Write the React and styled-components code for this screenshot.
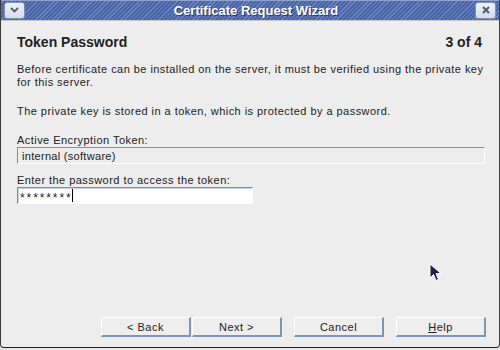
import React from "react";
import styled, { createGlobalStyle } from "styled-components";

const Global = createGlobalStyle`
  html, body { margin: 0; padding: 0; background: #e6e6e6; }
  body { font-family: "Liberation Sans", Arial, sans-serif; }
  * { box-sizing: border-box; }
`;

const Window = styled.div`
  position: relative;
  width: 500px;
  height: 348px;
  display: flex;
  flex-direction: column;
  background: #ededed;
  border-left: 1px solid #3a3a3a;
  border-right: 1px solid #3a3a3a;
  border-bottom: 1px solid #222;
  border-radius: 0 0 4px 4px;
  overflow: hidden;
`;

const TitleBar = styled.div`
  height: 21px;
  flex: none;
  display: flex;
  align-items: center;
  padding: 0 3px;
  gap: 4px;
  background: repeating-linear-gradient(
    135deg,
    #4a66a6 0px,
    #4a66a6 2px,
    #6c86c2 2px,
    #6c86c2 3px
  );
  border-bottom: 1px solid #c8c8c8;
  box-shadow: inset 0 1px 0 #8fa3d0;
`;

const TitleButton = styled.div`
  width: 21px;
  height: 17px;
  flex: none;
  display: flex;
  align-items: center;
  justify-content: center;
  background: linear-gradient(#eef1f7, #d6dcea);
  border: 1px solid #8091b6;
  border-radius: 3px;
  color: #4d5a76;
`;

const Title = styled.div`
  flex: 1;
  text-align: center;
  padding-left: 12px;
  color: #ffffff;
  font-weight: bold;
  font-size: 13px;
  text-shadow: 1px 1px 0 #2c3d6e;
`;

const Content = styled.div`
  flex: 1;
  display: flex;
  flex-direction: column;
  padding: 12px 13px 10px 16px;
  color: #222;
  font-size: 11px;
  letter-spacing: 0.45px;
`;

const Header = styled.div`
  display: flex;
  justify-content: space-between;
  align-items: center;
  font-weight: bold;
  font-size: 14px;
  letter-spacing: 0;
  height: 18px;
  padding-right: 4px;
  color: #222;
`;

const Para = styled.p`
  margin: ${(p) => p.$top}px 0 0 0;
  line-height: 13px;
  font-size: 11px;
`;

const Label = styled.div`
  margin-top: ${(p) => p.$top}px;
  line-height: 14px;
  font-size: 11px;
`;

const Field = styled.div`
  margin-top: 0;
  width: ${(p) => p.$width};
  height: 17px;
  display: flex;
  align-items: center;
  padding-left: 4px;
  font-size: 11px;
  letter-spacing: 0.3px;
  background: ${(p) => (p.$editable ? "#ffffff" : "#ededed")};
  border-style: solid;
  border-width: 1px;
  border-color: #7d8fa8 #ffffff #ffffff #8a8a8a;
  box-shadow: ${(p) => (p.$editable ? "inset 1px 1px 0 #c9d1dc" : "none")};
`;

const Stars = styled.span`
  letter-spacing: 1.9px;
  font-size: 12px;
  padding-top: 4px;
  margin-left: -2px;
`;

const Caret = styled.span`
  display: inline-block;
  width: 1px;
  height: 13px;
  background: #000;
  margin-left: -1px;
`;

const Spacer = styled.div`
  flex: 1;
`;

const ButtonRow = styled.div`
  display: flex;
  justify-content: flex-end;
  gap: 12px;
`;

const ButtonGroup = styled.div`
  display: flex;
  gap: 1px;
`;

const Button = styled.div`
  width: 90px;
  height: 20px;
  display: flex;
  align-items: center;
  justify-content: center;
  font-size: 11px;
  letter-spacing: 0.5px;
  color: #222;
  background: #eeeeee;
  border-style: solid;
  border-width: 1px 2px 2px 1px;
  border-color: #ffffff #7f95b4 #7f95b4 #ffffff;
`;

const U = styled.span`
  text-decoration: underline;
`;

const Cursor = styled.svg`
  position: absolute;
  left: 428px;
  top: 263px;
`;

export default function App() {
  return (
    <>
      <Global />
      <Window>
        <TitleBar>
          <TitleButton>
            <svg width="9" height="6" viewBox="0 0 9 6">
              <path d="M1 1 L4.5 4.5 L8 1" fill="none" stroke="#4d5a76" strokeWidth="1.8" />
            </svg>
          </TitleButton>
          <Title>Certificate Request Wizard</Title>
          <TitleButton>
            <svg width="8" height="8" viewBox="0 0 8 8">
              <path d="M1 1 L7 7 M7 1 L1 7" stroke="#4d5a76" strokeWidth="2" />
            </svg>
          </TitleButton>
        </TitleBar>
        <Content>
          <Header>
            <span>Token Password</span>
            <span>3 of 4</span>
          </Header>
          <Para $top={12}>
            Before certificate can be installed on the server, it must be verified using the private key
            <br />
            for this server.
          </Para>
          <Para $top={16}>
            The private key is stored in a token, which is protected by a password.
          </Para>
          <Label $top={15}>Active Encryption Token:</Label>
          <Field $width="468px">internal (software)</Field>
          <Label $top={9}>Enter the password to access the token:</Label>
          <Field $width="236px" $editable>
            <Stars>********</Stars>
            <Caret />
          </Field>
          <Spacer />
          <ButtonRow>
            <ButtonGroup>
              <Button>&lt; Back</Button>
              <Button>Next &gt;</Button>
            </ButtonGroup>
            <Button>Cancel</Button>
            <Button>
              <U>H</U>elp
            </Button>
          </ButtonRow>
        </Content>
        <Cursor width="13" height="19" viewBox="0 0 13 19">
          <path
            d="M1 1 L1 15 L4.5 11.5 L7 17.5 L9.5 16.5 L7 10.5 L12 10.5 Z"
            fill="#1c1f4a"
            stroke="#ffffff"
            strokeWidth="1"
          />
        </Cursor>
      </Window>
    </>
  );
}
